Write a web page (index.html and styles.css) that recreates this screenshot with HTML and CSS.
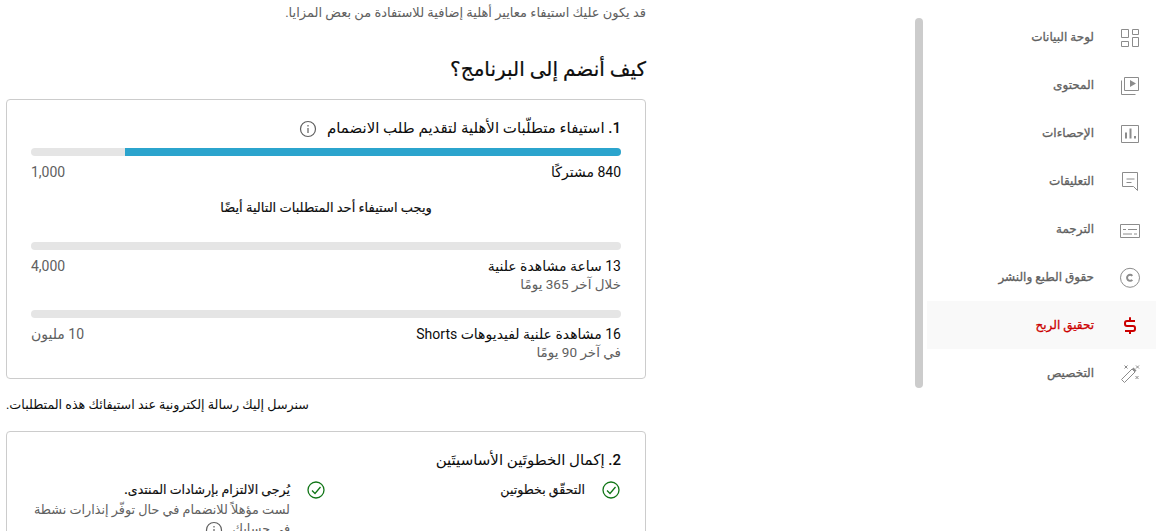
FILE: index.html
```html
<!DOCTYPE html>
<html lang="ar" dir="rtl">
<head>
    <meta charset="UTF-8">
    <meta name="viewport" content="width=device-width, initial-scale=1.0">
    <title>تحقيق الربح</title>
    <link rel="stylesheet" href="styles.css">
</head>
<body>
    <div class="page">
        <nav class="side">
            <div class="menu">
                <a class="item">
                    <svg class="ico" viewBox="0 0 20 20"><path d="M1.500 2.500h7v8h-7zM12.500 2.500h6v5h-6zM1.500 14.500h7v5h-7zM12.500 10.500h6v9h-6z"/></svg>
                    <span>لوحة البيانات</span>
                </a>
                <a class="item">
                    <svg class="ico" viewBox="0 0 20 20"><path d="M4.500 2.500h14v13h-14zM1.500 5.500v14h14"/><path class="solid" d="M10 5l6 3.500-6 3.500z"/></svg>
                    <span>المحتوى</span>
                </a>
                <a class="item">
                    <svg class="ico" viewBox="0 0 20 20"><path d="M1.500 2.500h17v17h-17z"/><path class="thick" d="M6 15.500v-6M10.500 15.500V5.500M15 15.500v-2.500"/></svg>
                    <span>الإحصاءات</span>
                </a>
                <a class="item">
                    <svg class="ico" viewBox="0 0 20 20"><path d="M2.500 1.500h15v18l-4-4h-11z"/><path d="M6.500 8h8M6.500 11.500h5"/></svg>
                    <span>التعليقات</span>
                </a>
                <a class="item">
                    <svg class="ico" viewBox="0 0 20 20"><path d="M.5 5.500h19v13H.5z"/><path d="M3 10.500h3M8 10.500h9M3 15h9M14 15h3"/></svg>
                    <span>الترجمة</span>
                </a>
                <a class="item">
                    <svg class="ico" viewBox="0 0 20 20"><circle cx="10" cy="10.800" r="9.500"/><path class="thick" d="M12.300 8.800a3 3 0 1 0 0 4"/></svg>
                    <span>حقوق الطبع والنشر</span>
                </a>
                <a class="item active">
                    <svg class="ico" viewBox="0 0 20 20"><path class="money" d="M15 6H7a2 2 0 0 0-2 2v1a2 2 0 0 0 2 2h6a2 2 0 0 1 2 2v1a2 2 0 0 1-2 2H5M10 2.300V6M10 16v3"/></svg>
                    <span>تحقيق الربح</span>
                </a>
                <a class="item">
                    <svg class="ico" viewBox="0 0 20 20"><path d="M1.500 16.500L12 6l3 3L4.500 19.500z"/><path class="solid" d="M12 6l1.500-1.500 3 3L15 9z"/><path d="M4.500 2.500l3 3M7.500 2.500l-3 3M16 2.500l3 3M19 2.500l-3 3M15.500 13l3 3M18.500 13l-3 3"/></svg>
                    <span>التخصيص</span>
                </a>
            </div>
            <div class="thumb"></div>
        </nav>

        <main class="content">
            <p class="intro">قد يكون عليك استيفاء معايير أهلية إضافية للاستفادة من بعض المزايا.</p>
            <h1>كيف أنضم إلى البرنامج؟</h1>

            <section class="card">
                <h2>1. استيفاء متطلّبات الأهلية لتقديم طلب الانضمام
                    <svg class="info" viewBox="0 0 18 18"><circle cx="9" cy="9" r="7.500"/><path d="M9 8v5M9 5v1.500"/></svg>
                </h2>
                <div class="bar"><div class="fill" style="width: 84%"></div></div>
                <div class="stat">
                    <div><div class="val">840 مشتركًا</div></div>
                    <div class="goal">1,000</div>
                </div>
                <p class="also">ويجب استيفاء أحد المتطلبات التالية أيضًا</p>
                <div class="bar"></div>
                <div class="stat">
                    <div><div class="val">13 ساعة مشاهدة علنية</div><div class="sub">خلال آخر 365 يومًا</div></div>
                    <div class="goal">4,000</div>
                </div>
                <div class="bar bar-next"></div>
                <div class="stat">
                    <div><div class="val">16 مشاهدة علنية لفيديوهات Shorts</div><div class="sub">في آخر 90 يومًا</div></div>
                    <div class="goal">10 مليون</div>
                </div>
            </section>

            <p class="notice">سنرسل إليك رسالة إلكترونية عند استيفائك هذه المتطلبات.</p>

            <section class="card card-two">
                <h2>2. إكمال الخطوتَين الأساسيتَين</h2>
                <div class="steps">
                    <div class="step">
                        <svg class="check" viewBox="0 0 18 18"><circle cx="9" cy="9" r="8"/><path d="M5 9.500l3 3 5.500-6.500"/></svg>
                        <div class="step-name">التحقّق بخطوتين</div>
                    </div>
                    <div class="step">
                        <svg class="check" viewBox="0 0 18 18"><circle cx="9" cy="9" r="8"/><path d="M5 9.500l3 3 5.500-6.500"/></svg>
                        <div>
                            <div class="step-name">يُرجى الالتزام بإرشادات المنتدى.</div>
                            <div class="sub">لست مؤهلاً للانضمام في حال توفّر إنذارات نشطة<br>في حسابك.
                                <svg class="info" viewBox="0 0 18 18"><circle cx="9" cy="9" r="7.500"/><path d="M9 8v5M9 5v1.500"/></svg>
                            </div>
                        </div>
                    </div>
                </div>
            </section>
        </main>
    </div>
</body>
</html>
```

FILE: styles.css
```css
html, body {
    margin: 0;
    height: 531px;
    overflow: hidden;
}

body {
    background-color: #fff;
    color: #0d0d0d;
    font-family: Roboto, "Noto Sans", "DejaVu Sans", sans-serif;
    font-size: 14px;
}

.page {
    display: flex;
    justify-content: space-between;
}

/* side menu */
.side {
    display: flex;
    width: 241px;
}

.menu {
    width: 229px;
    padding-top: 13px;
}

.item {
    display: flex;
    align-items: center;
    height: 48px;
    color: #606060;
    font-size: 12px;
    font-weight: 500;
    -webkit-text-stroke: 0.3px;
}

.item.active {
    background-color: #f9f9f9;
    color: #cc0000;
}

.ico {
    width: 20px;
    height: 20px;
    margin: 0 16px 0 26px;
    overflow: visible;
    fill: none;
    stroke: #8c8c8c;
    stroke-width: 1;
}

.ico .solid {
    fill: #8c8c8c;
    stroke: none;
}

.ico .thick {
    stroke-width: 2;
}

.ico .money {
    stroke: #cc0000;
    stroke-width: 2;
}

.thumb {
    width: 8px;
    height: 370px;
    margin: 18px 4px 0 0;
    background-color: #ccc;
    border-radius: 4px;
}

/* main column */
.content {
    width: 640px;
    margin-left: 6px;
}

.intro {
    margin: 4px 0 0;
    color: #606060;
    font-size: 13px;
    line-height: 18px;
}

h1 {
    margin: 32px 0 15px;
    font-size: 20px;
    font-weight: 500;
    line-height: 30px;
    -webkit-text-stroke: 0.2px;
}

.card {
    border: 1px solid #ccc;
    border-radius: 4px;
    padding: 18px 24px 16px;
    box-sizing: border-box;
    height: 280px;
}

h2 {
    margin: 0 0 10px;
    font-size: 15px;
    font-weight: 500;
    line-height: 20px;
}

.info {
    width: 18px;
    height: 18px;
    margin-right: 3px;
    vertical-align: middle;
    fill: none;
    stroke: #606060;
    stroke-width: 1.200;
}

h2 .info {
    margin-right: 6px;
}

.bar {
    height: 8px;
    background-color: #e5e5e5;
    border-radius: 4px;
    overflow: hidden;
}

.bar-next {
    margin-top: 17px;
}

.fill {
    height: 8px;
    background-color: #2ba4cd;
}

.stat {
    display: flex;
    justify-content: space-between;
    margin-top: 7px;
    line-height: 18px;
}

.val {
    font-size: 14px;
}

.goal {
    color: #606060;
    font-size: 14px;
}

.sub {
    color: #606060;
    font-size: 13.500px;
}

.also {
    margin: 18px 0 25px;
    text-align: center;
    font-size: 13px;
    font-weight: 500;
    line-height: 18px;
    -webkit-text-stroke: 0.15px;
}

.notice {
    margin: 17px 0;
    text-align: left;
    font-size: 12.700px;
    line-height: 18px;
}

.card-two {
    height: 180px;
    padding-top: 18px;
}

.steps {
    display: grid;
    grid-template-columns: repeat(2, minmax(0, 1fr));
}

.step {
    display: flex;
    gap: 17px;
    line-height: 18px;
}

.step-name {
    font-size: 12.600px;
    font-weight: 500;
    margin-top: 1px;
    -webkit-text-stroke: 0.15px;
}

.step .sub {
    margin-top: 1px;
    font-size: 12.800px;
    line-height: 19px;
    white-space: nowrap;
}

.check {
    flex: none;
    width: 18px;
    height: 18px;
    margin: 1px 1px 0 0;
    fill: none;
    stroke: #107516;
    stroke-width: 1.300;
}
```
